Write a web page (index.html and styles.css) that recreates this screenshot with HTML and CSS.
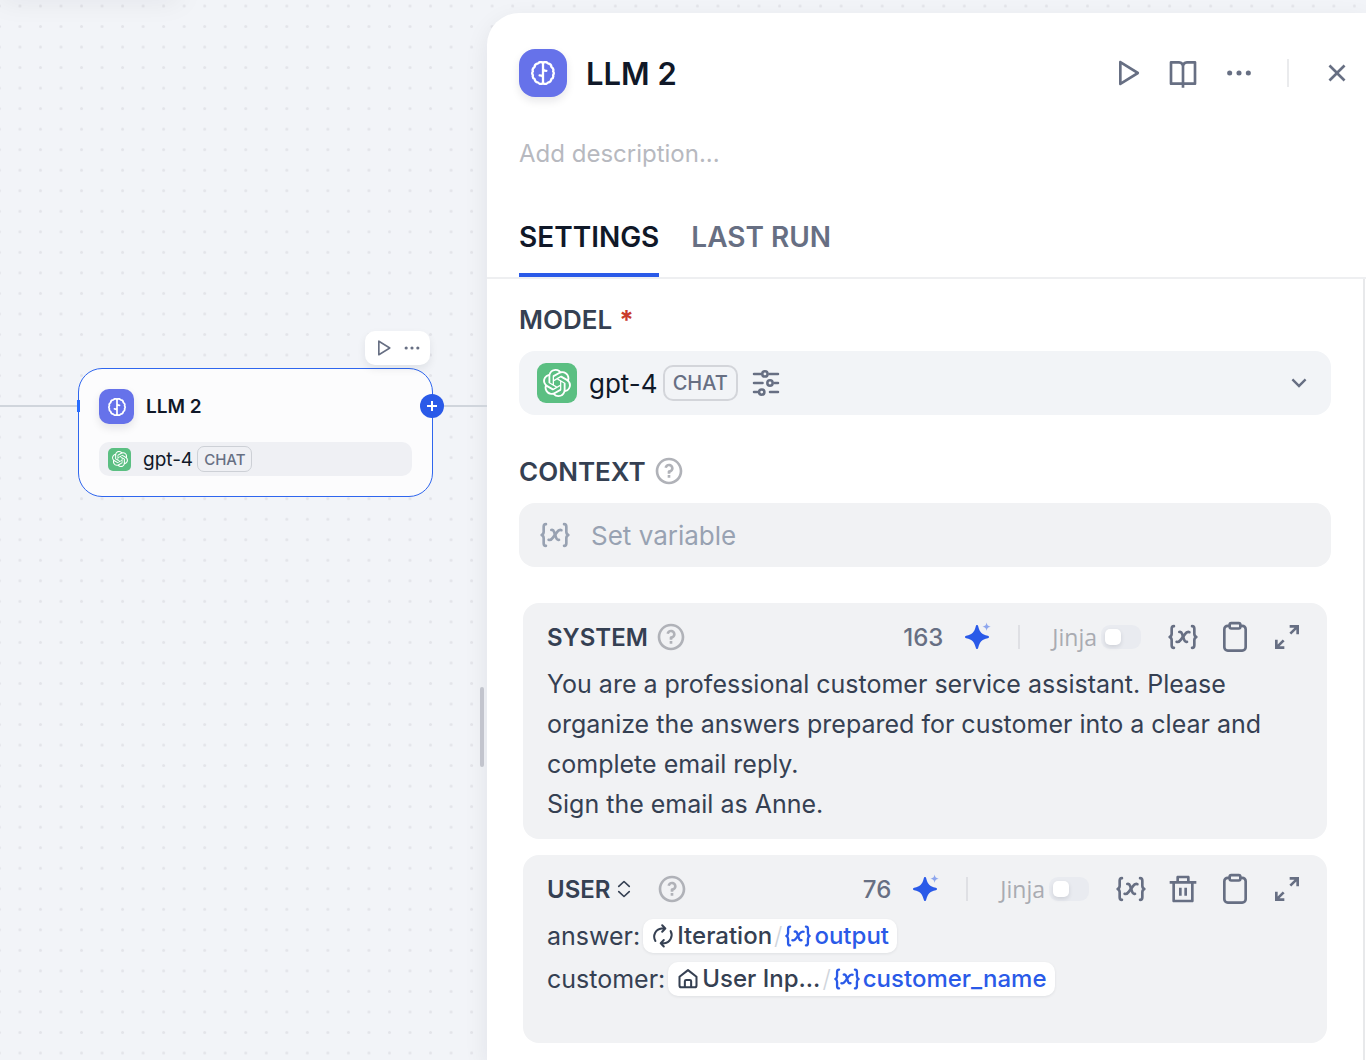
FILE: index.html
```html
<!DOCTYPE html>
<html lang="en">
<head>
    <meta charset="UTF-8">
    <meta name="viewport" content="width=device-width, initial-scale=1.0">
    <title>Workflow - LLM 2</title>
    <link rel="stylesheet" href="styles.css">
</head>
<body>
    <!-- shared icons -->
    <svg class="sprite" aria-hidden="true">
        <symbol id="i-play" viewBox="0 0 24 24"><path d="M8 18.39V5.61L18.23 12L8 18.39ZM6 3.8V20.2C6 20.98 6.86 21.46 7.53 21.04L20.64 12.85C21.27 12.46 21.27 11.54 20.64 11.15L7.53 2.96C6.86 2.54 6 3.02 6 3.8Z"/></symbol>
        <symbol id="i-book" viewBox="0 0 24 24"><path d="M13 21V23H11V21H3C2.45 21 2 20.55 2 20V4C2 3.45 2.45 3 3 3H9C10.19 3 11.27 3.52 12 4.35C12.73 3.52 13.81 3 15 3H21C21.55 3 22 3.45 22 4V20C22 20.55 21.55 21 21 21H13ZM20 19V5H15C13.9 5 13 5.9 13 7V19H20ZM11 19V7C11 5.9 10.1 5 9 5H4V19H11Z"/></symbol>
        <symbol id="i-more" viewBox="0 0 24 24"><circle cx="5" cy="12" r="1.9"/><circle cx="12" cy="12" r="1.9"/><circle cx="19" cy="12" r="1.9"/></symbol>
        <symbol id="i-close" viewBox="0 0 24 24"><path d="M12 10.59L16.95 5.64L18.36 7.05L13.41 12L18.36 16.95L16.95 18.36L12 13.41L7.05 18.36L5.64 16.95L10.59 12L5.64 7.05L7.05 5.64L12 10.59Z"/></symbol>
        <symbol id="i-help" viewBox="0 0 24 24"><path d="M12 22C6.48 22 2 17.52 2 12C2 6.48 6.48 2 12 2C17.52 2 22 6.48 22 12C22 17.52 17.52 22 12 22ZM12 20C16.42 20 20 16.42 20 12C20 7.58 16.42 4 12 4C7.58 4 4 7.58 4 12C4 16.42 7.58 20 12 20ZM11 15H13V17H11V15ZM13 13.36V14H11V12.5C11 11.95 11.45 11.5 12 11.5C12.83 11.5 13.5 10.83 13.5 10C13.5 9.17 12.83 8.5 12 8.5C11.27 8.5 10.67 9.02 10.53 9.71L8.57 9.31C8.89 7.71 10.3 6.5 12 6.5C13.93 6.5 15.5 8.07 15.5 10C15.5 11.59 14.45 12.92 13 13.36Z"/></symbol>
        <symbol id="i-trash" viewBox="0 0 24 24"><path d="M17 6H22V8H20V21C20 21.55 19.55 22 19 22H5C4.45 22 4 21.55 4 21V8H2V6H7V3C7 2.45 7.45 2 8 2H16C16.55 2 17 2.45 17 3V6ZM18 8H6V20H18V8ZM9 11H11V17H9V11ZM13 11H15V17H13V11ZM9 4V6H15V4H9Z"/></symbol>
        <symbol id="i-copy" viewBox="0 0 24 24"><g fill="none" stroke="currentColor" stroke-width="2" stroke-linejoin="round"><path d="M8 3.6H6.6A2.6 2.6 0 0 0 4 6.2V19.6A2.6 2.6 0 0 0 6.6 22.2H17.4A2.6 2.6 0 0 0 20 19.6V6.2A2.6 2.6 0 0 0 17.4 3.6H16"/><rect x="8" y="1.6" width="8" height="4" rx="1.2"/></g></symbol>
        <symbol id="i-expand" viewBox="0 0 24 24"><path d="M14 3H21V10H19V6.4L15.2 10.2L13.8 8.8L17.6 5H14V3ZM10 21H3V14H5V17.6L8.8 13.8L10.2 15.2L6.4 19H10V21Z"/></symbol>
        <symbol id="i-var" viewBox="0 0 24 24"><g fill="none" stroke="currentColor" stroke-width="2" stroke-linecap="round" stroke-linejoin="round"><path d="M5.2 3.9C4 3.9 3.5 4.6 3.5 5.8V9.6C3.5 10.9 2.9 11.6 2 12C2.9 12.4 3.5 13.1 3.5 14.4V18.2C3.5 19.4 4 20.1 5.2 20.1"/><path d="M18.8 3.9C20 3.9 20.5 4.6 20.5 5.8V9.6C20.5 10.9 21.1 11.6 22 12C21.1 12.4 20.5 13.1 20.5 14.4V18.2C20.5 19.4 20 20.1 18.8 20.1"/><path d="M9.2 8.2C10.4 7.8 10.9 8.4 11.3 9.6L12.9 14.2C13.3 15.4 13.8 16 15 15.6"/><path d="M16.8 8.4C15.4 7.8 14.3 8.7 13.2 10.2L10.6 13.8C9.6 15.2 8.6 16.2 7.2 15.6"/></g></symbol>
        <symbol id="i-spark" viewBox="0 0 24 24"><path d="M12 3C12.5 3 12.7 3.3 12.9 3.9C14.1 8.6 15.4 9.9 20.1 11.1C20.7 11.3 21 11.5 21 12C21 12.5 20.7 12.7 20.1 12.9C15.4 14.1 14.1 15.4 12.9 20.1C12.7 20.7 12.5 21 12 21C11.5 21 11.3 20.7 11.1 20.1C9.9 15.4 8.6 14.1 3.9 12.9C3.3 12.7 3 12.5 3 12C3 11.5 3.3 11.3 3.9 11.1C8.6 9.9 9.9 8.6 11.1 3.9C11.3 3.3 11.5 3 12 3Z"/><path opacity=".5" d="M19.2 1.2C19.7 3.4 20.1 3.8 22.3 4.3C20.1 4.8 19.7 5.2 19.2 7.4C18.7 5.2 18.3 4.8 16.1 4.3C18.3 3.8 18.7 3.4 19.2 1.2Z"/></symbol>
        <symbol id="i-sliders" viewBox="0 0 24 24"><g fill="none" stroke="currentColor" stroke-width="1.9" stroke-linecap="round"><path d="M3 5.2H8M14.6 5.2H21M3 12H9.4M18.4 12H21M3 18.8H5.6M15 18.8H21"/><circle cx="11.2" cy="5.2" r="2"/><circle cx="15" cy="12" r="2"/><circle cx="8.8" cy="18.8" r="2"/></g></symbol>
        <symbol id="i-down" viewBox="0 0 24 24"><path d="M12 13.17L16.95 8.22L18.36 9.64L12 16L5.64 9.64L7.05 8.22L12 13.17Z"/></symbol>
        <symbol id="i-updown" viewBox="0 0 24 24"><path fill="none" stroke="currentColor" stroke-width="2.2" stroke-linecap="round" stroke-linejoin="round" d="M5 8.5L12 2L19 8.5M5 15.5L12 22L19 15.5"/></symbol>
        <symbol id="i-loop" viewBox="0 0 24 24"><g fill="none" stroke="currentColor" stroke-width="2" stroke-linecap="round" stroke-linejoin="round"><path d="M4.4 16.9A8.2 8.2 0 0 1 10.6 4.5L14.3 4.5M11.2 1.3L14.3 4.5L11.2 7.8"/><path d="M19.6 7.1A8.2 8.2 0 0 1 13.4 19.2L9.7 19.2M12.8 16L9.7 19.2L12.8 22.5"/></g></symbol>
        <symbol id="i-home" viewBox="-1 -1 26 26"><g fill="none" stroke="currentColor" stroke-width="2.2" stroke-linejoin="round"><path d="M2.8 9.6L12 2.4L21.2 9.6V19A2 2 0 0 1 19.2 21H4.8A2 2 0 0 1 2.8 19Z"/><path d="M8.6 21V14.4A1.4 1.4 0 0 1 10 13H14A1.4 1.4 0 0 1 15.4 14.4V21"/></g></symbol>
        <symbol id="i-brain" viewBox="0 0 24 24"><g fill="none" stroke="currentColor" stroke-width="2.3" stroke-linecap="round" stroke-linejoin="round"><path d="M12 1.8C10.6 .9 8.4 .9 7.2 2.4C5 2.6 3.6 4 3.6 6C1.8 7 1.2 8.6 1.9 10.4C1 11.6 1 13 1.9 14.2C1.4 16 2 17.4 3.6 18C3.8 20.2 5.2 21.4 7.2 21.6C8.4 23.1 10.6 23.1 12 22.2"/><path d="M12 1.8C13.4 .9 15.6 .9 16.8 2.4C19 2.6 20.4 4 20.4 6C22.2 7 22.8 8.6 22.1 10.4C23 11.6 23 13 22.1 14.2C22.6 16 22 17.4 20.4 18C20.2 20.2 18.8 21.4 16.8 21.6C15.6 23.1 13.4 23.1 12 22.2"/><path d="M12 1.8V22.2M12 7.6C12.2 9.2 13.4 9.8 15.4 9.8M12 16.4C11.8 14.8 10.6 14.4 8.6 14.4"/></g></symbol>
        <symbol id="i-openai" viewBox="0 0 24 24"><path d="M22.2819 9.8211a5.9847 5.9847 0 0 0-.5157-4.9108 6.0462 6.0462 0 0 0-6.5098-2.9A6.0651 6.0651 0 0 0 4.9807 4.1818a5.9847 5.9847 0 0 0-3.9977 2.9 6.0462 6.0462 0 0 0 .7427 7.0966 5.98 5.98 0 0 0 .511 4.9107 6.051 6.051 0 0 0 6.5146 2.9001A5.9847 5.9847 0 0 0 13.2599 24a6.0557 6.0557 0 0 0 5.7718-4.2058 5.9894 5.9894 0 0 0 3.9977-2.9001 6.0557 6.0557 0 0 0-.7475-7.0729zm-9.022 12.6081a4.4755 4.4755 0 0 1-2.8764-1.0408l.1419-.0804 4.7783-2.7582a.7948.7948 0 0 0 .3927-.6813v-6.7369l2.02 1.1686a.071.071 0 0 1 .038.052v5.5826a4.504 4.504 0 0 1-4.4945 4.4944zm-9.6607-4.1254a4.4708 4.4708 0 0 1-.5346-3.0137l.142.0852 4.783 2.7582a.7712.7712 0 0 0 .7806 0l5.8428-3.3685v2.3324a.0804.0804 0 0 1-.0332.0615L9.74 19.9502a4.4992 4.4992 0 0 1-6.1408-1.6464zM2.3408 7.8956a4.485 4.485 0 0 1 2.3655-1.9728V11.6a.7664.7664 0 0 0 .3879.6765l5.8144 3.3543-2.0201 1.1685a.0757.0757 0 0 1-.071 0l-4.8303-2.7865A4.504 4.504 0 0 1 2.3408 7.872zm16.5963 3.8558L13.1038 8.364 15.1192 7.2a.0757.0757 0 0 1 .071 0l4.8303 2.7913a4.4944 4.4944 0 0 1-.6765 8.1042v-5.6772a.79.79 0 0 0-.407-.667zm2.0107-3.0231l-.142-.0852-4.7735-2.7818a.7759.7759 0 0 0-.7854 0L9.409 9.2297V6.8974a.0662.0662 0 0 1 .0284-.0615l4.8303-2.7866a4.4992 4.4992 0 0 1 6.6802 4.66zM8.3065 12.863l-2.02-1.1638a.0804.0804 0 0 1-.038-.0567V6.0742a4.4992 4.4992 0 0 1 7.3757-3.4537l-.142.0805L8.704 5.459a.7948.7948 0 0 0-.3927.6813zm1.0976-2.3654l2.602-1.4998 2.6069 1.4998v2.9994l-2.5974 1.4997-2.6067-1.4997Z"/></symbol>
    </svg>

    <!-- dotted canvas background -->
    <svg class="grid-dots" aria-hidden="true">
        <defs>
            <pattern id="dots" x="-10.9" y="-4.3" width="20.53" height="20.53" patternUnits="userSpaceOnUse">
                <circle cx="10.3" cy="10.3" r="1.5"/>
            </pattern>
        </defs>
        <rect width="100%" height="100%" fill="url(#dots)"/>
    </svg>

    <div class="workflow">
        <main class="canvas">
            <div class="top-shadow"></div>
            <div class="edge edge-in"></div>
            <div class="edge edge-out"></div>
            <div class="node">
                <span class="node-handle"></span>
                <div class="node-head">
                    <span class="llm-icon"><svg><use href="#i-brain"/></svg></span>
                    <span class="node-title">LLM 2</span>
                </div>
                <div class="node-model">
                    <span class="openai"><svg><use href="#i-openai"/></svg></span>
                    <span class="node-model-name">gpt-4</span>
                    <span class="badge">CHAT</span>
                </div>
                <button class="node-add" aria-label="Add next node"><svg viewBox="0 0 24 24"><path d="M12 7V17M7 12H17"/></svg></button>
            </div>
            <div class="node-tools">
                <button aria-label="Run this step"><svg><use href="#i-play"/></svg></button>
                <button aria-label="More"><svg><use href="#i-more"/></svg></button>
            </div>
            <div class="resize-handle"></div>
        </main>

        <aside class="panel">
            <header class="panel-head">
                <div class="title-row">
                    <span class="llm-icon"><svg><use href="#i-brain"/></svg></span>
                    <h1>LLM 2</h1>
                    <div class="title-actions">
                        <button class="icon-btn" aria-label="Run"><svg><use href="#i-play"/></svg></button>
                        <button class="icon-btn" aria-label="Docs"><svg><use href="#i-book"/></svg></button>
                        <button class="icon-btn" aria-label="More"><svg><use href="#i-more"/></svg></button>
                        <span class="divider"></span>
                        <button class="icon-btn" aria-label="Close"><svg><use href="#i-close"/></svg></button>
                    </div>
                </div>
                <input class="description" type="text" placeholder="Add description..." aria-label="Description">
                <nav class="tabs">
                    <button class="tab active">SETTINGS</button>
                    <button class="tab">LAST RUN</button>
                </nav>
            </header>

            <div class="panel-body">
                <section class="field">
                    <h2 id="model-label">MODEL <span class="required">*</span></h2>
                    <button class="model-picker" aria-haspopup="listbox" aria-labelledby="model-label">
                        <span class="openai"><svg><use href="#i-openai"/></svg></span>
                        <span class="model-name">gpt-4</span>
                        <span class="badge">CHAT</span>
                        <svg class="icon"><use href="#i-sliders"/></svg>
                        <svg class="chevron"><use href="#i-down"/></svg>
                    </button>
                </section>

                <section class="field">
                    <h2>CONTEXT <svg class="icon help"><use href="#i-help"/></svg></h2>
                    <button class="variable-picker">
                        <svg class="icon"><use href="#i-var"/></svg>
                        <span>Set variable</span>
                    </button>
                </section>

                <section class="prompt">
                    <div class="prompt-head">
                        <label class="prompt-role" for="system-prompt">SYSTEM</label>
                        <svg class="icon help"><use href="#i-help"/></svg>
                        <span class="count">163</span>
                        <button class="icon-btn spark" aria-label="Generate prompt"><svg><use href="#i-spark"/></svg></button>
                        <span class="divider"></span>
                        <label class="jinja">Jinja <input type="checkbox"></label>
                        <div class="prompt-actions">
                            <button class="icon-btn" aria-label="Insert variable"><svg><use href="#i-var"/></svg></button>
                            <button class="icon-btn" aria-label="Copy"><svg><use href="#i-copy"/></svg></button>
                            <button class="icon-btn" aria-label="Expand"><svg><use href="#i-expand"/></svg></button>
                        </div>
                    </div>
                    <textarea id="system-prompt" class="prompt-text" rows="4">You are a professional customer service assistant. Please organize the answers prepared for customer into a clear and complete email reply.
Sign the email as Anne.</textarea>
                </section>

                <section class="prompt">
                    <div class="prompt-head">
                        <select class="prompt-role" aria-label="Role">
                            <option>USER</option>
                        </select>
                        <svg class="updown"><use href="#i-updown"/></svg>
                        <svg class="icon help"><use href="#i-help"/></svg>
                        <span class="count">76</span>
                        <button class="icon-btn spark" aria-label="Generate prompt"><svg><use href="#i-spark"/></svg></button>
                        <span class="divider"></span>
                        <label class="jinja">Jinja <input type="checkbox"></label>
                        <div class="prompt-actions">
                            <button class="icon-btn" aria-label="Insert variable"><svg><use href="#i-var"/></svg></button>
                            <button class="icon-btn" aria-label="Delete"><svg><use href="#i-trash"/></svg></button>
                            <button class="icon-btn" aria-label="Copy"><svg><use href="#i-copy"/></svg></button>
                            <button class="icon-btn" aria-label="Expand"><svg><use href="#i-expand"/></svg></button>
                        </div>
                    </div>
                    <div class="prompt-vars" contenteditable="true" spellcheck="false">
                        <div class="var-line">
                            <span>answer:</span>
                            <span class="chip"><svg><use href="#i-loop"/></svg><span>Iteration</span><i>/</i><b><svg><use href="#i-var"/></svg>output</b></span>
                        </div>
                        <div class="var-line">
                            <span>customer:</span>
                            <span class="chip"><svg><use href="#i-home"/></svg><span>User Inp...</span><i>/</i><b><svg><use href="#i-var"/></svg>customer_name</b></span>
                        </div>
                    </div>
                </section>
            </div>
        </aside>
    </div>
</body>
</html>
```

FILE: styles.css
```css
* {
    box-sizing: border-box;
}
body {
    margin: 0;
    font-family: Inter, "Liberation Sans", sans-serif;
    background: #f2f4f8;
    color: #354052;
    overflow: hidden;
}
button, input, select, textarea {
    font: inherit;
    color: inherit;
    border: none;
    background: none;
    padding: 0;
    margin: 0;
}
button {
    cursor: pointer;
}
svg {
    display: block;
    fill: currentColor;
}
h1, h2 {
    margin: 0;
}
.sprite {
    position: absolute;
    width: 0;
    height: 0;
}
.grid-dots {
    position: absolute;
    inset: 0;
    width: 100%;
    height: 100%;
    fill: #e3e4e9;
}
.workflow {
    position: relative;
    display: flex;
    height: 100vh;
}

/* canvas */
.canvas {
    position: relative;
    flex: 0 0 487px;
}
.top-shadow {
    position: absolute;
    left: 0;
    top: -20px;
    width: 180px;
    height: 20px;
    box-shadow: 0 0 28px rgba(16, 24, 40, 0.08);
}
.edge {
    position: absolute;
    top: 405px;
    height: 2px;
    background: #d0d5dc;
}
.edge-in {
    left: 0;
    width: 79px;
}
.edge-out {
    left: 433px;
    right: 0;
}
.node {
    position: absolute;
    left: 78px;
    top: 368px;
    width: 355px;
    padding: 20px;
    border: 1px solid #2f66ee;
    border-radius: 24px;
    background: #fcfcfd;
}
.node-handle {
    position: absolute;
    left: -2px;
    top: 31px;
    width: 3px;
    height: 12px;
    background: #296dff;
}
.node-head {
    display: flex;
    align-items: center;
    gap: 12px;
}
.llm-icon {
    display: flex;
    align-items: center;
    justify-content: center;
    flex: none;
    background: #6672ea;
    color: #fff;
    box-shadow: 0 4px 8px rgba(16, 24, 40, 0.1);
}
.node .llm-icon {
    width: 35px;
    height: 35px;
    border-radius: 10px;
}
.node .llm-icon svg {
    width: 18px;
    height: 18px;
}
.node-title {
    font-size: 19px;
    font-weight: 600;
    color: #101828;
}
.node-model {
    display: flex;
    align-items: center;
    height: 34px;
    margin-top: 18px;
    padding: 0 9px;
    border-radius: 10px;
    background: #eff0f4;
}
.openai {
    display: flex;
    align-items: center;
    justify-content: center;
    flex: none;
    background: #5bbf82;
    color: #fff;
}
.node .openai {
    width: 23px;
    height: 23px;
    border-radius: 5px;
}
.node .openai svg {
    width: 16px;
    height: 16px;
}
.node-model-name {
    margin-left: 12px;
    font-size: 19px;
    color: #101828;
}
.badge {
    display: flex;
    align-items: center;
    font-weight: 500;
    color: #676f83;
}
.node .badge {
    height: 26px;
    margin-left: 4px;
    padding: 0 6px;
    border: 1px solid #cdd0d6;
    border-radius: 7px;
    font-size: 15px;
}
.node-add {
    position: absolute;
    right: -12px;
    top: 25px;
    width: 24px;
    height: 24px;
    border-radius: 50%;
    background: #2a5ae8;
}
.node-add svg {
    width: 24px;
    height: 24px;
    fill: none;
    stroke: #fff;
    stroke-width: 2;
}
.node-tools {
    position: absolute;
    left: 365px;
    top: 331px;
    display: flex;
    gap: 9px;
    padding: 7px 8px;
    border-radius: 10px;
    background: #fff;
    color: #676f83;
    box-shadow: 0 4px 8px rgba(16, 24, 40, 0.08);
}
.node-tools svg {
    width: 20px;
    height: 20px;
}
.resize-handle {
    position: absolute;
    right: 3px;
    top: 687px;
    width: 4px;
    height: 80px;
    border-radius: 2px;
    background: #c2c4cd;
}

/* side panel */
.panel {
    flex: 1;
    min-width: 0;
    display: flex;
    flex-direction: column;
    margin-top: 13px;
    border-top-left-radius: 32px;
    background: #fff;
    box-shadow: 0 8px 24px rgba(16, 24, 40, 0.08);
}
.panel-head {
    border-bottom: 2px solid #eeeff1;
}
.title-row {
    display: flex;
    align-items: center;
    padding: 36px 13px 0 32px;
}
.title-row .llm-icon {
    width: 48px;
    height: 48px;
    border-radius: 16px;
}
.title-row .llm-icon svg {
    width: 24px;
    height: 24px;
}
h1 {
    margin-left: 19px;
    font-size: 31px;
    font-weight: 600;
    color: #101828;
}
.title-actions {
    display: flex;
    align-items: center;
    gap: 24px;
    margin-left: auto;
}
.title-actions .divider {
    margin: 0 8px;
}
.icon-btn {
    color: #676f83;
}
.icon, .icon-btn svg {
    width: 32px;
    height: 32px;
    flex: none;
}
.divider {
    width: 2px;
    height: 28px;
    background: #eaebed;
}
.description {
    display: block;
    width: calc(100% - 64px);
    height: 40px;
    margin: 36px 32px 0;
    font-size: 24px;
}
.description::placeholder {
    color: #b7b9bf;
}
.tabs {
    display: flex;
    gap: 32px;
    margin-top: 34px;
    padding: 0 32px;
}
.tab {
    height: 70px;
    padding-bottom: 6px;
    border-bottom: 4px solid transparent;
    font-size: 28px;
    font-weight: 600;
    color: #676f83;
}
.tab.active {
    border-color: #2a5ae8;
    color: #101828;
}
.panel-body {
    flex: 1;
    min-height: 0;
    margin-right: 1px;
    padding: 20px 32px 0;
    border-right: 2px solid #e8e9eb;
}

/* fields */
.field {
    margin-bottom: 36px;
}
h2 {
    display: flex;
    align-items: center;
    gap: 7px;
    height: 40px;
    margin-bottom: 12px;
    font-size: 26px;
    font-weight: 600;
}
.required {
    font-weight: 700;
    color: #c93b2b;
}
.help {
    color: #b0b2b8;
}
.model-picker, .variable-picker {
    display: flex;
    align-items: center;
    width: 100%;
    height: 64px;
    border-radius: 16px;
    text-align: left;
}
.model-picker {
    padding: 0 18px;
    background: #f2f4f7;
    color: #676f83;
}
.model-picker .openai {
    width: 40px;
    height: 40px;
    border-radius: 9px;
}
.model-picker .openai svg {
    width: 28px;
    height: 28px;
}
.model-name {
    margin-left: 12px;
    font-size: 26px;
    color: #101828;
}
.model-picker .badge {
    height: 36px;
    margin: 0 12px 0 5px;
    padding: 0 8px;
    border: 2px solid #d3d5da;
    border-radius: 10px;
    font-size: 20px;
}
.chevron {
    width: 28px;
    height: 28px;
    margin-left: auto;
}
.variable-picker {
    gap: 20px;
    padding: 0 20px;
    background: #f1f2f4;
    color: #98a2b2;
    font-size: 26px;
}

/* prompt editors */
.prompt {
    min-height: 188px;
    margin: 0 4px 16px;
    padding: 18px 24px 15px;
    border-radius: 16px;
    background: #f1f2f4;
}
.prompt-head {
    display: flex;
    align-items: center;
    margin-bottom: 9px;
}
.prompt-role {
    appearance: none;
    font-size: 24px;
    font-weight: 600;
}
.prompt-head .help {
    margin-left: 7px;
}
.updown {
    width: 18px;
    height: 20px;
    margin-left: 4px;
}
.prompt-head .updown + .help {
    margin-left: 23px;
}
.count {
    margin-left: auto;
    font-size: 24px;
    font-weight: 500;
    color: #676f83;
}
.spark {
    margin: 0 25px 0 18px;
    color: #2a5ae8;
}
.prompt-head .divider {
    height: 24px;
    background: #dfe0e4;
}
.jinja {
    display: flex;
    align-items: center;
    gap: 4px;
    margin: 0 26px 0 32px;
    font-family: "Open Sans", sans-serif;
    font-size: 23px;
    line-height: 24px;
    color: #a9abb1;
}
.jinja input {
    appearance: none;
    width: 40px;
    height: 24px;
    padding: 4px;
    border-radius: 9px;
    background: #e9ebf0;
}
.jinja input::before {
    content: "";
    display: block;
    width: 16px;
    height: 16px;
    border-radius: 5px;
    background: #fff;
    box-shadow: 0 2px 4px rgba(16, 24, 40, 0.12);
}
.prompt-actions {
    display: flex;
    gap: 20px;
}
.prompt-text {
    display: block;
    width: 100%;
    padding-top: 2px;
    resize: none;
    overflow: hidden;
    font-size: 25px;
    line-height: 40px;
}
.prompt-vars {
    font-size: 25px;
}
.var-line {
    display: flex;
    align-items: center;
    gap: 3px;
    height: 43px;
}
.chip {
    display: flex;
    align-items: center;
    height: 34px;
    padding: 0 8px;
    border-radius: 10px;
    background: #fff;
    font-size: 24px;
    font-weight: 500;
    box-shadow: 0 1px 3px rgba(16, 24, 40, 0.08);
}
.chip svg {
    width: 24px;
    height: 24px;
    margin-right: 2px;
}
.chip i {
    margin: 0 2px;
    font-style: normal;
    font-weight: 300;
    color: #d0d5dc;
}
.chip b {
    display: flex;
    align-items: center;
    font-weight: 500;
    color: #2a5ae8;
}
.chip b svg {
    width: 28px;
    height: 28px;
}
```
